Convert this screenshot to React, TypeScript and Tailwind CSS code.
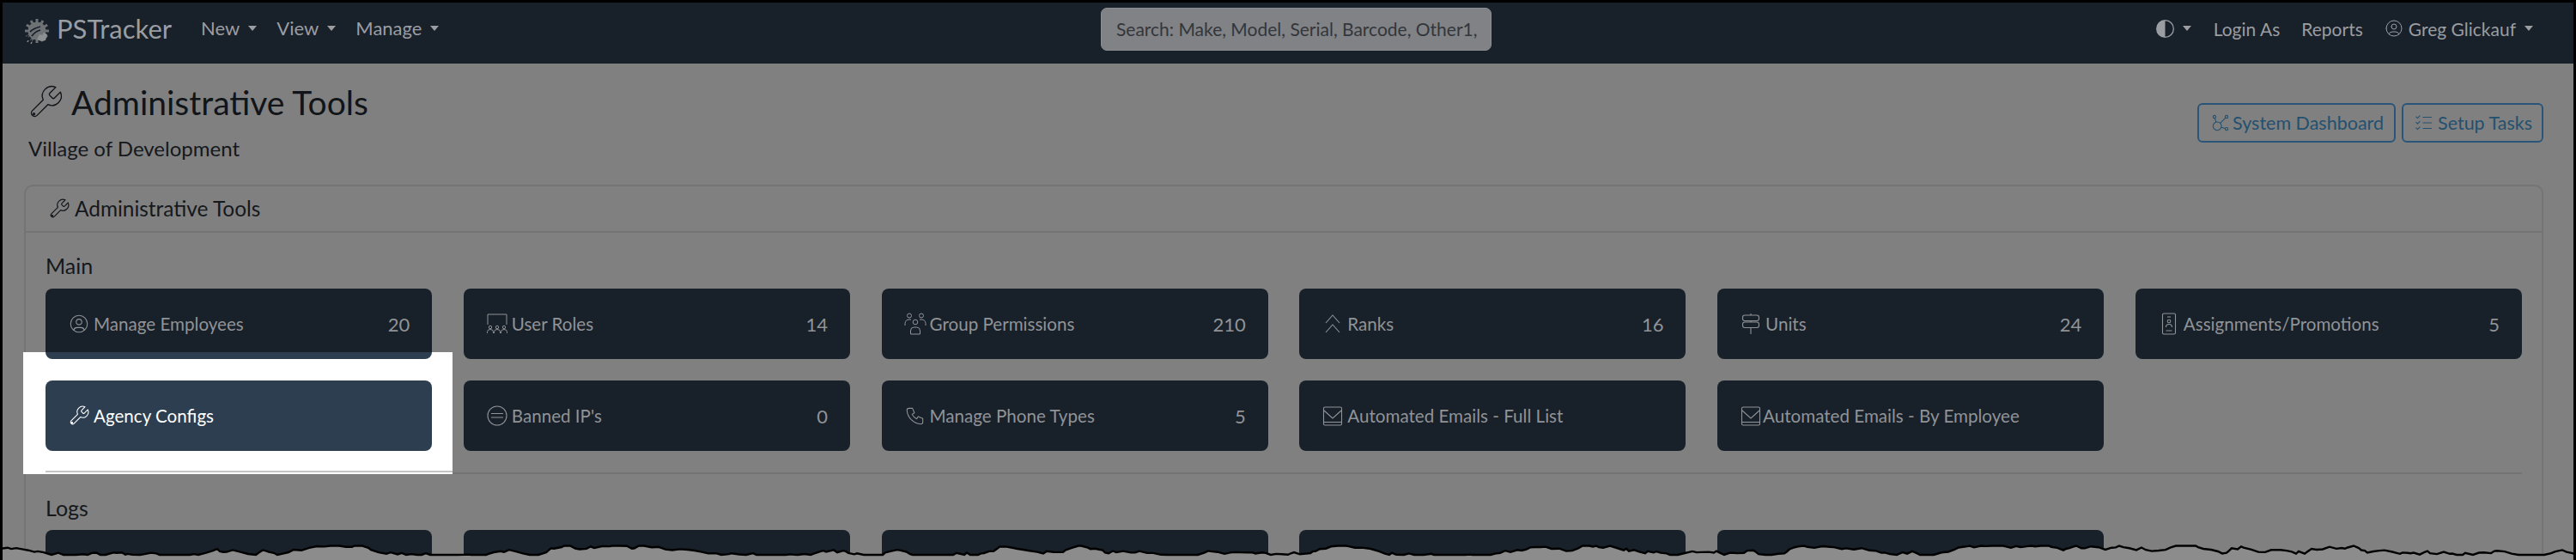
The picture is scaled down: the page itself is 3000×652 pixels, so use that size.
import React from "react";
import { TbUserCircle, TbPhone, TbAffiliate, TbListCheck } from "react-icons/tb";
import { BsCircleHalf } from "react-icons/bs";

type IconProps = { className?: string; strokeWidth?: number };

const RolesIcon = ({ className }: IconProps) => (
  <svg viewBox="0 0 26 26" fill="none" stroke="currentColor" strokeWidth="1" className={className}>
    <path d="M2 14V2h22v12" />
    <circle cx="5" cy="17" r="1.7" /><path d="M1.5 24v-1.5a3.5 3 0 0 1 7 0V24" />
    <circle cx="13" cy="17" r="1.7" /><path d="M9.5 24v-1.5a3.5 3 0 0 1 7 0V24" />
    <circle cx="21" cy="17" r="1.7" /><path d="M17.5 24v-1.5a3.5 3 0 0 1 7 0V24" />
  </svg>
);
const GroupIcon = ({ className }: IconProps) => (
  <svg viewBox="0 0 26 26" fill="none" stroke="currentColor" strokeWidth="1" className={className}>
    <circle cx="6" cy="3.5" r="2.5" /><circle cx="20" cy="3.5" r="2.5" /><circle cx="13" cy="11" r="2.8" />
    <path d="M1 15v-2.5A5 5 0 0 1 6 8h2M25 15v-2.5A5 5 0 0 0 20 8h-2" />
    <path d="M7.5 25v-4a4 4 0 0 1 4-4h3a4 4 0 0 1 4 4v4z" />
  </svg>
);
const RanksIcon = ({ className }: IconProps) => (
  <svg viewBox="0 0 26 26" fill="none" stroke="currentColor" strokeWidth="1.1" className={className}>
    <path d="M5 12l8-9 8 9M5 23l8-9 8 9" />
  </svg>
);
const UnitsIcon = ({ className }: IconProps) => (
  <svg viewBox="0 0 26 26" fill="none" stroke="currentColor" strokeWidth="1.1" className={className}>
    <rect x="3.5" y="3" width="19" height="6.5" rx="2.5" /><rect x="3.5" y="11" width="19" height="6.5" rx="2.5" />
    <path d="M13 1v2M13 9.5V11M13 17.5V25" />
  </svg>
);
const BannedIcon = ({ className }: IconProps) => (
  <svg viewBox="0 0 26 26" fill="none" stroke="currentColor" strokeWidth="1.1" className={className}>
    <circle cx="13" cy="13" r="11" /><path d="M6 10.5h14M6 15h14" />
  </svg>
);
const MailIcon = ({ className }: IconProps) => (
  <svg viewBox="0 0 26 26" fill="none" stroke="currentColor" strokeWidth="1.1" className={className}>
    <rect x="2.5" y="3" width="21" height="21" rx="1.5" /><path d="M3 7l10 9 10-9" /><path d="M2.5 20.5h21" />
  </svg>
);
const AssignIcon = ({ className }: IconProps) => (
  <svg viewBox="0 0 26 26" fill="none" stroke="currentColor" strokeWidth="1.1" className={className}>
    <rect x="5.5" y="1" width="15" height="24" rx="1.5" /><path d="M11 5h4" /><circle cx="13" cy="10" r="1.8" /><path d="M9.5 17a3.5 3.5 0 0 1 7 0M9.5 21h7" />
  </svg>
);
const WrenchIcon = ({ className, strokeWidth = 1 }: IconProps) => (
  <svg viewBox="0 0 24 24" fill="none" stroke="currentColor" strokeWidth={strokeWidth} strokeLinejoin="round" className={className}>
    <path d="M14.7 6.3a1 1 0 0 0 0 1.4l1.6 1.6a1 1 0 0 0 1.4 0l3.77-3.77a6 6 0 0 1-7.94 7.94l-6.91 6.91a2.12 2.12 0 0 1-3-3l6.91-6.91a6 6 0 0 1 7.94-7.94l-3.76 3.76z" />
    <circle cx="4.6" cy="19.5" r="0.6" />
  </svg>
);

const Logo = () => (
  <svg viewBox="0 0 28 30" className="mt-[8px] h-[30px] w-[28px] shrink-0">
    <g fill="#6f7275">
      {Array.from({ length: 12 }).map((_, i) => (
        <rect key={i} x="12.5" y="0" width="3" height="5" transform={`rotate(${i * 30} 14 14)`} />
      ))}
      <circle cx="14" cy="14" r="10.5" />
    </g>
    <path d="M6 15c4-4 8-5 12-6M8 20c3-4 6-6 10-7M4 19l-2 4M8 24l-2 4" stroke="#18202a" strokeWidth="1.8" fill="none" />
    <path d="M14 24l3-6 3 1 2-3 4 2-2 7-5 1z" fill="#8d9093" />
    <path d="M3 27l1-2M7 29l1-2" stroke="#8d9093" strokeWidth="1.5" />
  </svg>
);

const Caret = () => <span className="ml-[10px] inline-block h-0 w-0 border-x-[5px] border-t-[6px] border-x-transparent border-t-[#9a9da1]" />;

const NavItem = ({ label }: { label: string }) => (
  <span className="flex items-center text-[22px] leading-none text-[#9a9da1]">{label}<Caret /></span>
);

type CardData = { icon: React.ComponentType<IconProps>; label: string; count?: string; gap?: string };
const row1: CardData[] = [
  { icon: TbUserCircle, label: "Manage Employees", count: "20" },
  { icon: RolesIcon, label: "User Roles", count: "14" },
  { icon: GroupIcon, label: "Group Permissions", count: "210" },
  { icon: RanksIcon, label: "Ranks", count: "16" },
  { icon: UnitsIcon, label: "Units", count: "24" },
  { icon: AssignIcon, label: "Assignments/Promotions", count: "5" },
];
const row2: CardData[] = [
  { icon: BannedIcon, label: "Banned IP's", count: "0" },
  { icon: TbPhone, label: "Manage Phone Types", count: "5" },
  { icon: MailIcon, label: "Automated Emails - Full List" },
  { icon: MailIcon, label: "Automated Emails - By Employee", gap: "gap-[1px]" },
];

const Card = ({ icon: Icon, label, count, gap }: CardData) => (
  <div className="flex h-[82px] items-center justify-between rounded-[8px] bg-[#18202a] px-[26px] text-[20.6px] text-[#909396]">
    <span className={`flex items-center ${gap ?? "gap-[4px]"}`}>
      <Icon className="h-[26px] w-[26px] shrink-0" strokeWidth={1} />
      <span>{label}</span>
    </span>
    {count && <span className="text-[22px]">{count}</span>}
  </div>
);

const edge = (() => {
  let seed = 7;
  const rnd = () => {
    seed = (seed * 16807) % 2147483647;
    return seed / 2147483647;
  };
  const pts: string[] = [];
  let y = 8;
  for (let x = 0; x <= 3000; x += 3 + Math.floor(rnd() * 7)) {
    y = Math.max(1.5, Math.min(12, y + (rnd() - 0.5) * 6));
    pts.push(`${x} ${y.toFixed(1)}`);
  }
  pts.push("3000 8");
  return pts.join(" L");
})();

export default function App() {
  return (
    <div className="relative flex h-[652px] w-[3000px] flex-col overflow-hidden border-x-[3px] border-t-[3px] border-black bg-[#808080] font-['Lato','Liberation_Sans',sans-serif]">
      <nav className="relative flex h-[71px] shrink-0 items-center justify-between bg-[#18202a] pb-[11px] pl-[26px] pr-[47px]">
        <div className="flex items-center">
          <Logo />
          <span className="ml-[9px] text-[31px] leading-none text-[#9a9da1]">PSTracker</span>
          <div className="ml-[34px] flex items-center gap-[23px]">
            <NavItem label="New" />
            <NavItem label="View" />
            <NavItem label="Manage" />
          </div>
        </div>
        <div className="absolute left-[1279px] top-[6px] flex h-[50px] w-[455px] items-center whitespace-nowrap rounded-[7px] border border-[#8a8e92] bg-[#808285] px-[17px] text-[21px] text-[#33363a]">
          Search: Make, Model, Serial, Barcode, Other1,
        </div>
        <div className="flex items-center text-[21px] leading-none text-[#9a9da1]">
          <BsCircleHalf className="h-[21px] w-[21px]" />
          <Caret />
          <span className="ml-[26px]">Login As</span>
          <span className="ml-[25px]">Reports</span>
          <TbUserCircle className="ml-[24px] h-[24px] w-[24px]" style={{ strokeWidth: 1 }} />
          <span className="ml-[5px]">Greg Glickauf</span>
          <Caret />
        </div>
      </nav>

      <main className="flex min-h-0 flex-1 flex-col pl-[25px] pr-[35px]">
        <header className="flex h-[141px] shrink-0 items-start justify-between pl-[5px]">
          <div>
            <h1 className="mt-[20px] -ml-[2px] flex items-center gap-[8px] text-[39px] leading-[50px] text-[#111418]">
              <WrenchIcon className="h-[44px] w-[44px]" strokeWidth={0.75} />
              Administrative Tools
            </h1>
            <p className="mt-[14px] text-[24px] leading-[30px] text-[#15181c]">Village of Development</p>
          </div>
          <div className="mt-[46px] flex gap-[7px]">
            <span className="flex h-[46px] items-center gap-[1px] rounded-[6px] border-2 border-[#2a5578] px-[12px] text-[21.5px] text-[#24506f]">
              <TbAffiliate className="h-[26px] w-[26px]" style={{ strokeWidth: 1 }} />
              System Dashboard
            </span>
            <span className="flex h-[46px] items-center gap-[3px] rounded-[6px] border-2 border-[#2a5578] px-[11px] text-[21.5px] text-[#24506f]">
              <TbListCheck className="h-[26px] w-[26px]" style={{ strokeWidth: 1 }} />
              Setup Tasks
            </span>
          </div>
        </header>

        <section className="flex min-h-[440px] flex-col rounded-t-[10px] border-x-2 border-t-2 border-[#747474]">
          <div className="flex h-[54px] shrink-0 items-center gap-[5px] border-b-2 border-[#747474] pl-[26px] text-[24.4px] text-[#15181c]">
            <WrenchIcon className="h-[26px] w-[26px]" strokeWidth={1.1} />
            Administrative Tools
          </div>
          <div className="px-[23px]">
            <h2 className="mt-[23px] text-[25px] leading-[30px] text-[#15181c]">Main</h2>
            <div className="mt-[12px] grid grid-cols-6 gap-x-[36.6px] gap-y-[25px]">
              {row1.map((c) => <Card key={c.label} {...c} />)}
              <div className="relative">
                <div className="absolute -bottom-[27px] -left-[26px] -right-[24px] -top-[33px] overflow-hidden bg-white">
                  <div className="ml-[26px] mr-[24px] h-[8px] rounded-b-[8px] bg-[#2c3e50]" />
                  <div className="absolute bottom-[2px] left-[26px] right-0 h-[2px] bg-[#c4c4c4]" />
                </div>
                <div className="relative flex h-[82px] items-center gap-[4px] rounded-[8px] bg-[#2c3e50] px-[26px] text-[20.6px] text-white">
                  <WrenchIcon className="h-[26px] w-[26px]" />
                  Agency Configs
                </div>
              </div>
              {row2.map((c) => <Card key={c.label} {...c} />)}
            </div>
            <hr className="mt-[25px] border-t-2 border-[#747474]" />
            <h2 className="mt-[24px] text-[25px] leading-[30px] text-[#15181c]">Logs</h2>
            <div className="mt-[11px] grid grid-cols-6 gap-x-[36.6px]">
              {[0, 1, 2, 3, 4].map((i) => <div key={i} className="h-[82px] rounded-[8px] bg-[#18202a]" />)}
            </div>
          </div>
        </section>
      </main>

      <svg viewBox="0 0 3000 18" className="absolute -left-[3px] bottom-0 h-[18px] w-[3000px]">
        <path d={`M${edge} L3000 18 L0 18 Z`} fill="#8c8c8c" stroke="none" />
        <path d={`M${edge}`} fill="none" stroke="#000" strokeWidth="2.4" />
      </svg>
    </div>
  );
}
